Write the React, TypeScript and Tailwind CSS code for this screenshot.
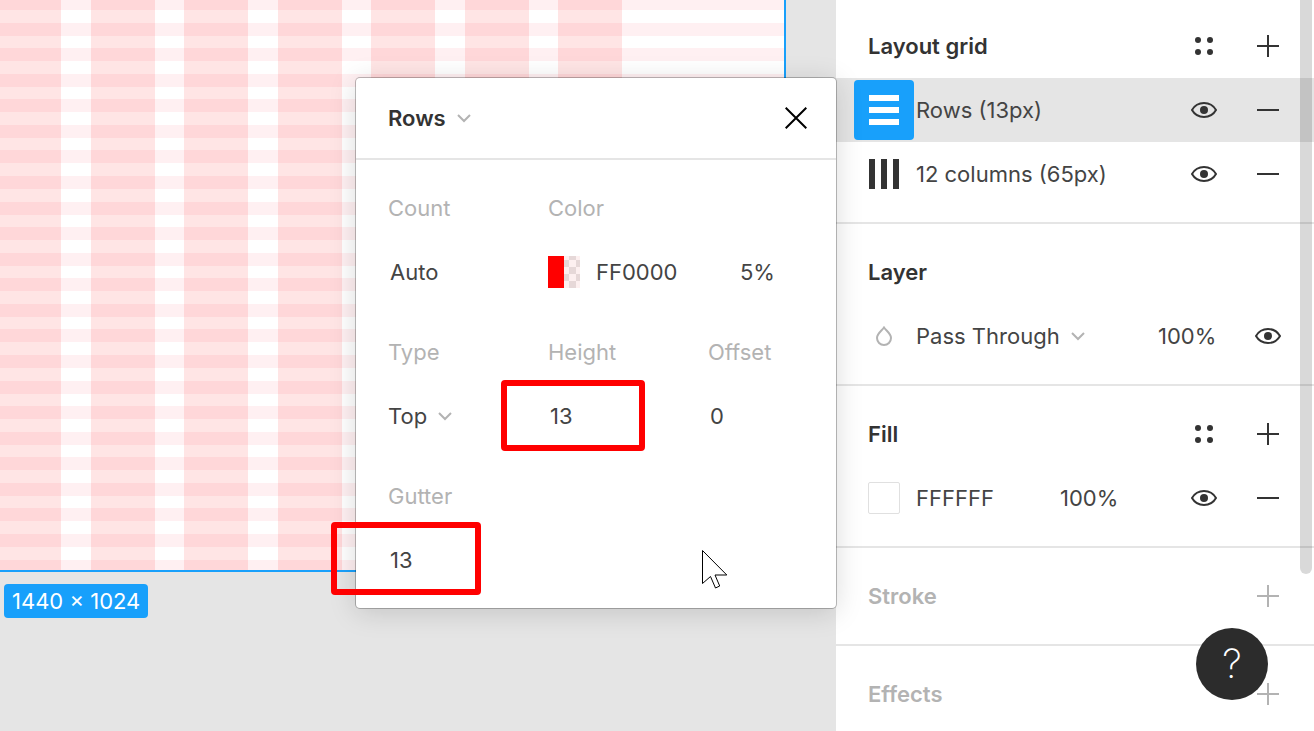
import { useId, type ReactNode } from "react";

const COLUMN_STARTS = [-3, 91, 184, 278, 371, 465, 558];
const ROW_STARTS = Array.from({ length: 23 }, (_, i) => Math.round(-3 + i * 25.57));

function GridFrame() {
  return (
    <svg className="block shrink-0" width="786" height="572" viewBox="0 0 786 572" aria-hidden="true">
      <rect width="786" height="572" fill="#fff" />
      {COLUMN_STARTS.map((x) => (
        <rect key={x} x={x} y="0" width="64" height="570" fill="#ffe5e5" />
      ))}
      {ROW_STARTS.map((y) => (
        <rect key={y} x="0" y={y} width="784" height="13" fill="rgb(255,0,30)" fillOpacity="0.06" />
      ))}
      <path d="M785 0V571H0" fill="none" stroke="#18a0fb" strokeWidth="2" />
    </svg>
  );
}

function Chevron() {
  return (
    <svg width="14" height="10" viewBox="0 0 14 10" fill="none" stroke="#b3b3b3" strokeWidth="2" aria-hidden="true">
      <path d="M1 2l6 6 6-6" />
    </svg>
  );
}

function Plus() {
  return (
    <svg width="22" height="22" viewBox="0 0 22 22" stroke="currentColor" strokeWidth="2" aria-hidden="true">
      <path d="M11 0v22M0 11h22" />
    </svg>
  );
}

function Minus() {
  return (
    <svg width="22" height="22" viewBox="0 0 22 22" stroke="currentColor" strokeWidth="2" aria-hidden="true">
      <path d="M0 11h22" />
    </svg>
  );
}

function Eye() {
  return (
    <svg width="26" height="16" viewBox="0 0 26 16" fill="none" stroke="currentColor" strokeWidth="2" aria-hidden="true">
      <path d="M1 8C3.4 3.8 7.8 1 13 1s9.600 2.800 12 7c-2.400 4.200-6.800 7-12 7S3.400 12.200 1 8Z" />
      <circle cx="13" cy="8" r="4" fill="currentColor" stroke="none" />
    </svg>
  );
}

function Dots() {
  return (
    <svg width="18" height="18" viewBox="0 0 18 18" fill="currentColor" aria-hidden="true">
      <circle cx="3" cy="3" r="3" />
      <circle cx="15" cy="3" r="3" />
      <circle cx="3" cy="15" r="3" />
      <circle cx="15" cy="15" r="3" />
    </svg>
  );
}

function Drop() {
  return (
    <svg width="16" height="20" viewBox="0 0 16 20" fill="none" stroke="#b3b3b3" strokeWidth="2" aria-hidden="true">
      <path d="M8 1.500C6 4.600 1 7.500 1 12a7 7 0 0 0 14 0C15 7.500 10 4.600 8 1.500Z" />
    </svg>
  );
}

function Bars({ vertical = false }: { vertical?: boolean }) {
  return (
    <svg width="30" height="30" viewBox="0 0 30 30" stroke="currentColor" strokeWidth="6" aria-hidden="true">
      <path d={vertical ? "M3 0v30M15 0v30M27 0v30" : "M0 3h30M0 15h30M0 27h30"} />
    </svg>
  );
}

function IconButton({ label, children }: { label: string; children: ReactNode }) {
  return (
    <button type="button" aria-label={label} className="flex h-16 w-16 shrink-0 items-center justify-center">
      {children}
    </button>
  );
}

function Section({ title, muted, actions, children }: { title: string; muted?: boolean; actions?: ReactNode; children?: ReactNode }) {
  return (
    <section className="border-b-2 border-[#e5e5e5] py-4 first:pt-[14px] last:border-b-0">
      <div className={`flex h-16 items-center pr-[14px] pl-8 ${muted ? "text-[#b3b3b3]" : ""}`}>
        <h2 className="flex-1 font-semibold">{title}</h2>
        {actions}
      </div>
      {children}
    </section>
  );
}

function GridRow({ label, active, vertical }: { label: string; active?: boolean; vertical?: boolean }) {
  return (
    <div className={`flex h-16 items-center gap-0.5 pr-[14px] pl-[18px] ${active ? "bg-[#e5e5e5]" : ""}`}>
      <button
        type="button"
        aria-label={`${label} settings`}
        className={`flex h-15 w-15 items-center justify-center rounded-sm ${active ? "bg-[#18a0fb] text-white" : ""}`}
      >
        <Bars vertical={vertical} />
      </button>
      <span className="flex-1 text-[#444]">{label}</span>
      <div className="flex">
        <IconButton label={`Hide ${label}`}><Eye /></IconButton>
        <IconButton label={`Remove ${label}`}><Minus /></IconButton>
      </div>
    </div>
  );
}

function Select({ label, options }: { label: string; options: string[] }) {
  return (
    <div className="flex items-center gap-[11px]">
      <select aria-label={label} className="appearance-none bg-transparent outline-none [field-sizing:content]">
        {options.map((o) => (
          <option key={o}>{o}</option>
        ))}
      </select>
      <Chevron />
    </div>
  );
}

function Field({ label, value }: { label: string; value: string }) {
  const id = useId();
  return (
    <div className="w-40 shrink-0">
      <label htmlFor={id} className="flex h-16 items-center text-[#b3b3b3]">{label}</label>
      <input id={id} defaultValue={value} className="block h-16 w-full bg-transparent pl-0.5 outline-none" />
    </div>
  );
}

function GridPopover() {
  return (
    <div
      role="dialog"
      aria-label="Grid settings"
      className="absolute top-[78px] right-[478px] w-[480px] rounded-sm bg-white shadow-[0_0_0_1px_rgba(0,0,0,0.25),0_4px_28px_rgba(0,0,0,0.15)]"
    >
      <div className="flex items-center justify-between border-b-2 border-[#e5e5e5] pr-2 pl-8 font-semibold">
        <Select label="Grid kind" options={["Rows", "Columns", "Grid"]} />
        <button type="button" aria-label="Close" className="flex h-20 w-16 items-center justify-center text-black">
          <svg width="22" height="22" viewBox="0 0 22 22" stroke="currentColor" strokeWidth="2" aria-hidden="true">
            <path d="M.7.7l20.600 20.600M21.300.7L.7 21.300" />
          </svg>
        </button>
      </div>
      <div className="flex flex-col gap-4 py-4 pl-8 text-[#444]">
        <div className="flex">
          <Field label="Count" value="Auto" />
          <div>
            <label htmlFor="grid-color" className="flex h-16 items-center text-[#b3b3b3]">Color</label>
            <div className="flex h-16 items-center">
              <svg width="32" height="32" viewBox="0 0 32 32" aria-hidden="true">
                <rect width="16" height="32" fill="#f00" />
                <rect x="16" width="16" height="32" fill="#fdf0f0" />
                <path d="M21 0h7v4h-7zM16 4h5v7h-5zM28 4h4v7h-4zM21 11h7v7h-7zM16 18h5v7h-5zM28 18h4v7h-4zM21 25h7v7h-7z" fill="#e6d8d8" />
              </svg>
              <input id="grid-color" defaultValue="FF0000" className="ml-4 h-16 w-36 bg-transparent outline-none" />
              <input aria-label="Opacity" defaultValue="5%" className="h-16 w-16 bg-transparent outline-none" />
            </div>
          </div>
        </div>
        <div className="flex">
          <div className="w-40 shrink-0">
            <div className="flex h-16 items-center text-[#b3b3b3]">Type</div>
            <div className="flex h-16 items-center">
              <Select label="Type" options={["Top", "Bottom", "Center", "Stretch"]} />
            </div>
          </div>
          <Field label="Height" value="13" />
          <div className="w-32 overflow-hidden">
            <Field label="Offset" value="0" />
          </div>
        </div>
        <Field label="Gutter" value="13" />
      </div>
      <div className="pointer-events-none absolute top-[302px] left-[145px] h-[71px] w-[144px] rounded-sm border-6 border-[#f00]" />
      <div className="pointer-events-none absolute top-[444px] -left-[25px] h-[73px] w-[150px] rounded-sm border-6 border-[#f00]" />
      <svg className="pointer-events-none absolute top-[472px] left-[346px]" width="26" height="40" viewBox="0 0 26 40" aria-hidden="true">
        <path d="M.5.5v33L8.500 26.500 13.500 38l4.200-2-4.700-11H24.800Z" fill="#fff" stroke="#000" />
      </svg>
    </div>
  );
}

export default function App() {
  return (
    <div className="relative flex h-screen overflow-hidden bg-[#e5e5e5] font-[Inter,'Liberation_Sans',sans-serif] text-[22px] leading-8 text-[#333]">
      <main className="flex min-w-0 flex-1 flex-col items-start overflow-hidden">
        <GridFrame />
        <div className="mt-3 ml-1 rounded-sm bg-[#18a0fb] px-2 py-px text-white">1440 × 1024</div>
      </main>

      <aside className="relative w-[478px] shrink-0 overflow-hidden bg-white">
        <Section
          title="Layout grid"
          actions={
            <>
              <IconButton label="Grid styles"><Dots /></IconButton>
              <IconButton label="Add layout grid"><Plus /></IconButton>
            </>
          }
        >
          <GridRow label="Rows (13px)" active />
          <GridRow label="12 columns (65px)" vertical />
        </Section>

        <Section title="Layer">
          <div className="flex h-16 items-center pr-[14px] pl-8">
            <div className="mr-4 flex w-8 justify-center"><Drop /></div>
            <div className="flex-1 text-[#444]">
              <Select label="Blend mode" options={["Pass Through", "Normal", "Multiply"]} />
            </div>
            <input aria-label="Layer opacity" defaultValue="100%" className="w-[78px] bg-transparent text-[#444] outline-none" />
            <IconButton label="Hide layer"><Eye /></IconButton>
          </div>
        </Section>

        <Section
          title="Fill"
          actions={
            <>
              <IconButton label="Fill styles"><Dots /></IconButton>
              <IconButton label="Add fill"><Plus /></IconButton>
            </>
          }
        >
          <div className="flex h-16 items-center pr-[14px] pl-8">
            <button type="button" aria-label="Fill color" className="mr-4 h-8 w-8 rounded-xs border border-[#e0e0e0] bg-white" />
            <input aria-label="Fill hex" defaultValue="FFFFFF" className="w-36 bg-transparent text-[#444] outline-none" />
            <input aria-label="Fill opacity" defaultValue="100%" className="w-0 flex-1 bg-transparent text-[#444] outline-none" />
            <IconButton label="Hide fill"><Eye /></IconButton>
            <IconButton label="Remove fill"><Minus /></IconButton>
          </div>
        </Section>

        <Section title="Stroke" muted actions={<IconButton label="Add stroke"><Plus /></IconButton>} />
        <Section title="Effects" muted actions={<IconButton label="Add effect"><Plus /></IconButton>} />

        <div className="absolute top-0 right-0.5 h-[574px] w-3 rounded-b-full bg-black/15" />
        <button
          type="button"
          aria-label="Help"
          className="absolute right-[46px] bottom-[31px] flex h-18 w-18 items-center justify-center rounded-full bg-[#2c2c2c] text-[40px] font-extralight text-white"
        >
          ?
        </button>
      </aside>

      <GridPopover />
    </div>
  );
}
